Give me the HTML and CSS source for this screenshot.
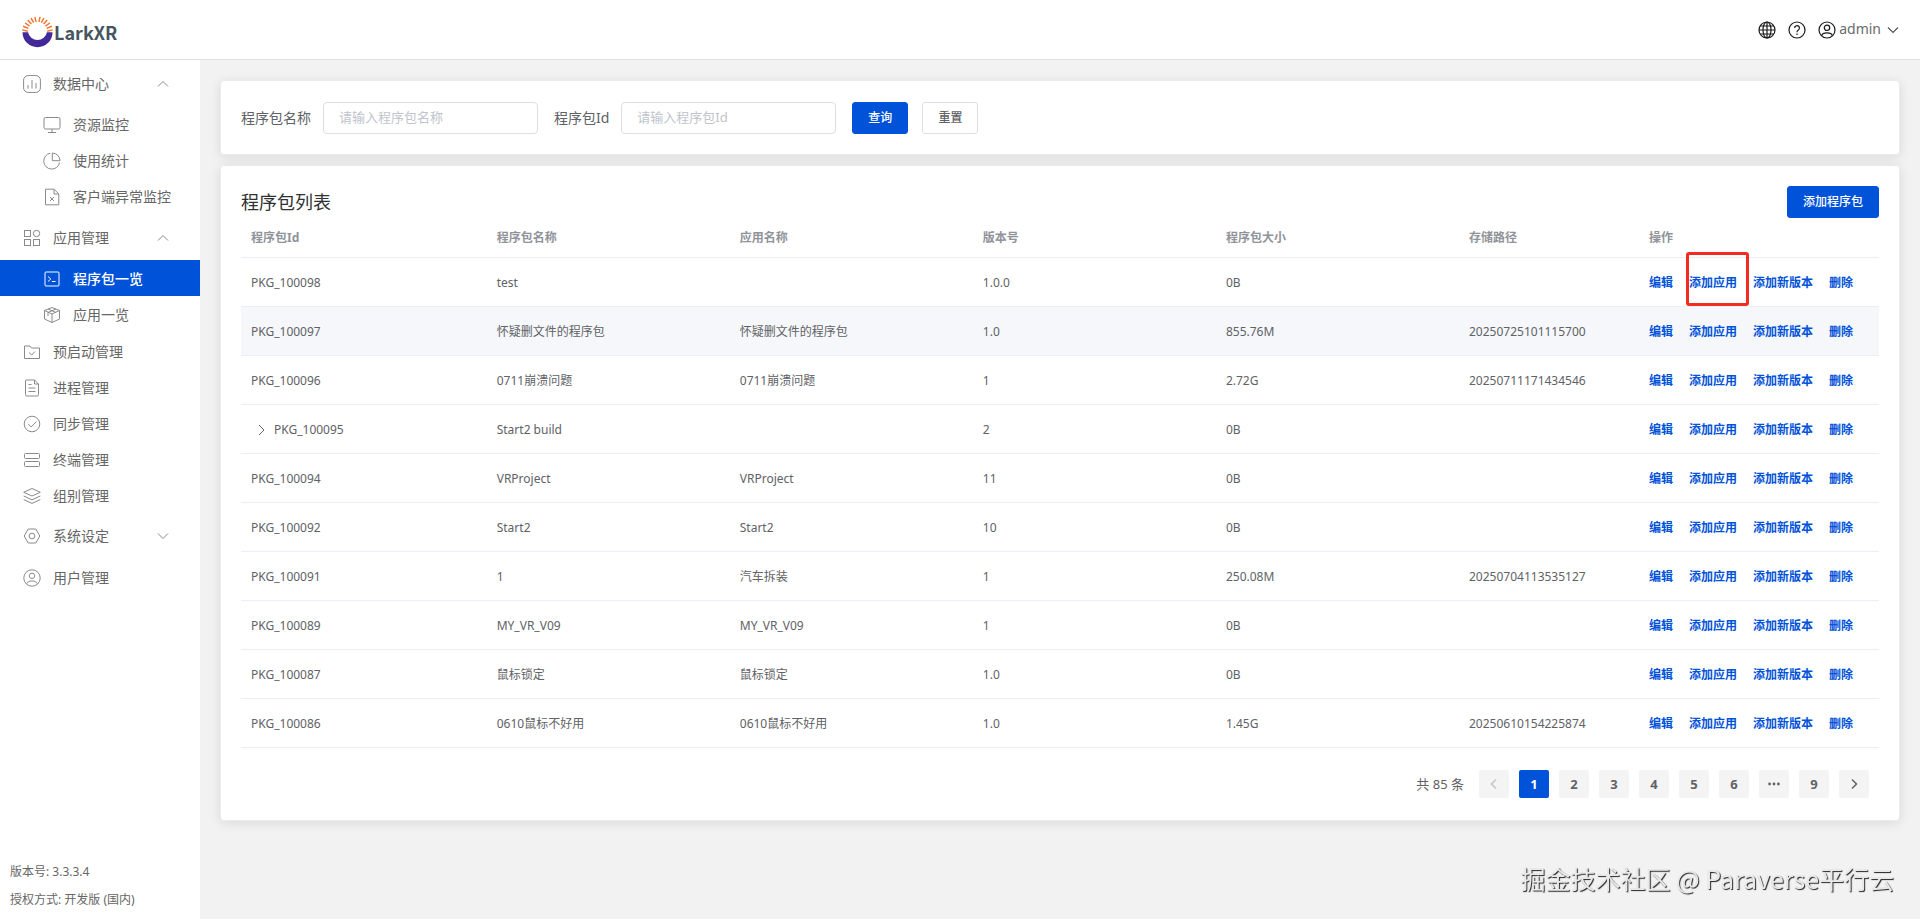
FILE: index.html
```html
<!DOCTYPE html>
<html lang="zh-CN">
<head>
<meta charset="utf-8">
<title>LarkXR</title>
<link rel="stylesheet" href="styles.css">
</head>
<body>
<header class="topbar">
  <a class="brand" href="#">
    <svg class="brand-mark" viewBox="0 0 32 32" aria-hidden="true">
      <path fill="none" stroke="#f0742c" stroke-width="1.5" d="M6 15.300L0.300 13.800M6.500 12.300L1.200 10.100M7.800 9.900L3.200 6.700M9.700 7.800L6 3.700M12 6.300L9.400 1.600M14.600 5.500L13.300 .4M17.400 5.500L18.700 .4M20 6.300L22.600 1.600M22.300 7.800L26 3.700M24.200 9.900L28.800 6.700M25.500 12.300L30.800 10.100M26 15.300L31.700 13.800"/>
      <path fill="#43289a" d="M.5 16.200H6.300A9.800 9.300 0 0 0 25.700 16.200H31.500A15.500 15.500 0 0 1 .5 16.200Z"/>
    </svg>
    <span class="brand-name">LarkXR</span>
  </a>
  <div class="tools">
    <button class="tool" aria-label="语言">
      <svg viewBox="0 0 18 18"><circle cx="9" cy="9" r="8"/><ellipse cx="9" cy="9" rx="4" ry="8"/><path d="M9 1V17M1 9H17M2.200 5H15.800M2.200 13H15.800"/></svg>
    </button>
    <button class="tool" aria-label="帮助">
      <svg viewBox="0 0 18 18"><circle cx="9" cy="9" r="8"/><path d="M6.600 7A2.400 2.400 0 1 1 10.300 9C9.400 9.600 9 10 9 11.200M9 12.600V14"/></svg>
    </button>
    <button class="tool user">
      <svg viewBox="0 0 18 18"><circle cx="9" cy="9" r="8"/><circle cx="9" cy="6.800" r="2.700"/><path d="M3.600 14.800C4.600 11 13.400 11 14.400 14.800"/></svg>
      <span>admin</span>
      <svg class="chev" viewBox="0 0 12 12"><path d="M1 3.500L6 8.500L11 3.500"/></svg>
    </button>
  </div>
</header>
<div class="body">
  <aside class="sidebar">
    <nav class="menu">
      <section class="group">
        <button class="item head"><svg viewBox="0 0 18 18"><rect x=".6" y=".6" width="16.800" height="16.800" rx="4.500"/><path d="M5 10V13.500M9 5V13.500M13 8V13.500"/></svg>数据中心<svg class="chev" viewBox="0 0 12 12"><path d="M1 8.500L6 3.500L11 8.500"/></svg></button>
        <a class="item sub" href="#"><svg viewBox="0 0 18 18"><rect x="1" y="1.500" width="16" height="11.500" rx="1.500"/><path d="M9 13V16.500M5 16.500H13"/></svg>资源监控</a>
        <a class="item sub" href="#"><svg viewBox="0 0 18 18"><path d="M7.300 1.200A8 8 0 1 0 16.600 10.500M9.300 1V8.700H17A7.800 7.800 0 0 0 9.300 1Z"/></svg>使用统计</a>
        <a class="item sub" href="#"><svg viewBox="0 0 18 18"><path d="M2.500 1.200H11L15.800 6V16.800H2.500ZM11 1.200V6H15.800M7 9L11 13M11 9L7 13"/></svg>客户端异常监控</a>
      </section>
      <section class="group">
        <button class="item head"><svg viewBox="0 0 18 18"><rect x="1.500" y="1.500" width="6" height="6"/><circle cx="13.500" cy="4.500" r="3.200"/><rect x="1.500" y="10.500" width="6" height="6"/><rect x="10.500" y="10.500" width="6" height="6"/></svg>应用管理<svg class="chev" viewBox="0 0 12 12"><path d="M1 8.500L6 3.500L11 8.500"/></svg></button>
        <a class="item sub active" href="#" aria-current="page"><svg viewBox="0 0 18 18"><rect x="2" y="2" width="14" height="14" rx="1"/><path d="M5 6.500L7.800 9L5 11.500M8.800 11.500H12.500"/></svg>程序包一览</a>
        <a class="item sub" href="#"><svg viewBox="0 0 18 18"><path d="M9 1.500L16.500 4.500V13L9 16.500L1.500 13V4.500ZM1.500 4.500L9 8L16.500 4.500M9 8V16.500M5 3L13 6.500M13 3L5 6.500M5 6.500V10"/></svg>应用一览</a>
      </section>
      <section class="group">
        <a class="item" href="#"><svg viewBox="0 0 18 18"><path d="M1.500 3H7L8.500 5H16.500V15.500H1.500ZM6 9.500L8.700 12L12 8.500"/></svg>预启动管理</a>
        <a class="item" href="#"><svg viewBox="0 0 18 18"><path d="M3.500 1H11.500L15.500 5V15.500A1.500 1.500 0 0 1 14 17H4A1.500 1.500 0 0 1 2.500 15.500V2A1 1 0 0 1 3.500 1ZM11.500 1V5H15.500M5.500 5.500H8.500M5.500 9H12.500M5.500 12.500H12.500"/></svg>进程管理</a>
        <a class="item" href="#"><svg viewBox="0 0 18 18"><circle cx="9" cy="9" r="7.800"/><path d="M5 8.800L8.200 12L13.500 6.500"/></svg>同步管理</a>
        <a class="item" href="#"><svg viewBox="0 0 18 18"><rect x="1.500" y="2.500" width="15" height="5" rx="1"/><rect x="1.500" y="10.500" width="15" height="5" rx="1"/></svg>终端管理</a>
        <a class="item" href="#"><svg viewBox="0 0 18 18"><path d="M9 1.500L17.300 5.300L9 9L.7 5.300ZM.7 9L9 12.800L17.300 9M.7 12.600L9 16.400L17.300 12.600"/></svg>组别管理</a>
        <button class="item head"><svg viewBox="0 0 18 18"><path d="M5.200 2H12.800L16.800 9L12.800 16H5.200L1.200 9Z"/><circle cx="9" cy="9" r="2.800"/></svg>系统设定<svg class="chev" viewBox="0 0 12 12"><path d="M1 3.500L6 8.500L11 3.500"/></svg></button>
      </section>
      <section class="group">
        <a class="item" href="#"><svg viewBox="0 0 18 18"><circle cx="9" cy="9" r="8.200"/><circle cx="9" cy="6.800" r="2.700"/><path d="M3.600 14.800C4.600 11 13.400 11 14.400 14.800"/></svg>用户管理</a>
      </section>
    </nav>
    <footer class="about">
      <p>版本号: 3.3.3.4</p>
      <p>授权方式: 开发版 (国内)</p>
    </footer>
  </aside>
  <main class="main">
    <form class="card filters">
      <label class="field">程序包名称<input class="input" type="text" placeholder="请输入程序包名称"></label>
      <label class="field">程序包Id<input class="input" type="text" placeholder="请输入程序包Id"></label>
      <div class="filter-actions">
        <button class="btn primary" type="button">查询</button>
        <button class="btn" type="button">重置</button>
      </div>
    </form>
    <section class="card list">
      <div class="list-head">
        <h1 class="title">程序包列表</h1>
        <button class="btn primary">添加程序包</button>
      </div>
      <table class="table">
        <colgroup><col class="col-id"><col><col><col><col><col class="col-path"><col class="col-ops"></colgroup>
        <thead><tr><th>程序包Id</th><th>程序包名称</th><th>应用名称</th><th>版本号</th><th>程序包大小</th><th>存储路径</th><th>操作</th></tr></thead>
        <tbody>
          <tr><td>PKG_100098</td><td>test</td><td></td><td>1.0.0</td><td>0B</td><td></td><td><div class="ops"><a href="#">编辑</a><a class="marked" href="#">添加应用</a><a href="#">添加新版本</a><a href="#">删除</a></div></td></tr>
          <tr class="hover"><td>PKG_100097</td><td>怀疑删文件的程序包</td><td>怀疑删文件的程序包</td><td>1.0</td><td>855.76M</td><td>20250725101115700</td><td><div class="ops"><a href="#">编辑</a><a href="#">添加应用</a><a href="#">添加新版本</a><a href="#">删除</a></div></td></tr>
          <tr><td>PKG_100096</td><td>0711崩溃问题</td><td>0711崩溃问题</td><td>1</td><td>2.72G</td><td>20250711171434546</td><td><div class="ops"><a href="#">编辑</a><a href="#">添加应用</a><a href="#">添加新版本</a><a href="#">删除</a></div></td></tr>
          <tr><td><div class="tree"><button class="expand" aria-label="展开"><svg viewBox="0 0 12 12"><path d="M4 1L9 6L4 11"/></svg></button>PKG_100095</div></td><td>Start2 build</td><td></td><td>2</td><td>0B</td><td></td><td><div class="ops"><a href="#">编辑</a><a href="#">添加应用</a><a href="#">添加新版本</a><a href="#">删除</a></div></td></tr>
          <tr><td>PKG_100094</td><td>VRProject</td><td>VRProject</td><td>11</td><td>0B</td><td></td><td><div class="ops"><a href="#">编辑</a><a href="#">添加应用</a><a href="#">添加新版本</a><a href="#">删除</a></div></td></tr>
          <tr><td>PKG_100092</td><td>Start2</td><td>Start2</td><td>10</td><td>0B</td><td></td><td><div class="ops"><a href="#">编辑</a><a href="#">添加应用</a><a href="#">添加新版本</a><a href="#">删除</a></div></td></tr>
          <tr><td>PKG_100091</td><td>1</td><td>汽车拆装</td><td>1</td><td>250.08M</td><td>20250704113535127</td><td><div class="ops"><a href="#">编辑</a><a href="#">添加应用</a><a href="#">添加新版本</a><a href="#">删除</a></div></td></tr>
          <tr><td>PKG_100089</td><td>MY_VR_V09</td><td>MY_VR_V09</td><td>1</td><td>0B</td><td></td><td><div class="ops"><a href="#">编辑</a><a href="#">添加应用</a><a href="#">添加新版本</a><a href="#">删除</a></div></td></tr>
          <tr><td>PKG_100087</td><td>鼠标锁定</td><td>鼠标锁定</td><td>1.0</td><td>0B</td><td></td><td><div class="ops"><a href="#">编辑</a><a href="#">添加应用</a><a href="#">添加新版本</a><a href="#">删除</a></div></td></tr>
          <tr><td>PKG_100086</td><td>0610鼠标不好用</td><td>0610鼠标不好用</td><td>1.0</td><td>1.45G</td><td>20250610154225874</td><td><div class="ops"><a href="#">编辑</a><a href="#">添加应用</a><a href="#">添加新版本</a><a href="#">删除</a></div></td></tr>
        </tbody>
      </table>
      <nav class="pager" aria-label="分页">
        <span class="total">共 85 条</span>
        <button class="page" disabled aria-label="上一页"><svg viewBox="0 0 12 12"><path d="M8 1.500L3.500 6L8 10.500"/></svg></button>
        <button class="page current">1</button>
        <button class="page">2</button>
        <button class="page">3</button>
        <button class="page">4</button>
        <button class="page">5</button>
        <button class="page">6</button>
        <button class="page" aria-label="更多"><svg class="dots" viewBox="0 0 12 12"><circle cx="1.600" cy="6" r="1.400"/><circle cx="6" cy="6" r="1.400"/><circle cx="10.400" cy="6" r="1.400"/></svg></button>
        <button class="page">9</button>
        <button class="page" aria-label="下一页"><svg viewBox="0 0 12 12"><path d="M4 1.500L8.500 6L4 10.500"/></svg></button>
      </nav>
    </section>
  </main>
</div>
<div class="watermark">掘金技术社区 @ Paraverse平行云</div>
</body>
</html>
```
FILE: styles.css
```css
* { box-sizing: border-box; }

body {
  margin: 0;
  min-height: 100vh;
  display: flex;
  flex-direction: column;
  background: #f2f2f2;
  color: #606266;
  font: 14px/20px "Noto Sans", "Noto Sans CJK SC", sans-serif;
}

button, input { font: inherit; color: inherit; }
button { cursor: pointer; }
a { color: inherit; text-decoration: none; }
svg { flex: none; fill: none; stroke: currentColor; }

.topbar {
  height: 60px;
  display: flex;
  align-items: center;
  justify-content: space-between;
  padding: 0 21px 0 22px;
  background: #fff;
  border-bottom: 1px solid #e0e0e0;
}
.brand { display: flex; align-items: center; gap: 1px; padding-top: 5px; }
.brand-mark { width: 31px; height: 32px; stroke: none; }
.brand-name { color: #45565f; font: bold 18px/24px "Noto Sans CJK SC", sans-serif; }
.tools { display: flex; gap: 12px; color: #1a1a1a; }
.tool {
  display: flex;
  align-items: center;
  padding: 0;
  border: 0;
  background: none;
}
.tool svg { width: 18px; height: 18px; stroke-width: 1.2; }
.user { gap: 3px; }
.user span { padding-bottom: 2px; color: #6b6b6b; }
.user .chev { width: 12px; height: 12px; margin-left: 3px; color: #555; }

.body { flex: 1; display: flex; }

.sidebar {
  width: 200px;
  flex: none;
  display: flex;
  flex-direction: column;
  justify-content: space-between;
  background: #fff;
  color: #666;
}
.menu { display: flex; flex-direction: column; gap: 1px; padding-top: 1px; }
.group { display: flex; flex-direction: column; }
.item {
  height: 36px;
  display: flex;
  align-items: center;
  gap: 12px;
  padding: 2px 23px 0;
  border: 0;
  background: none;
  white-space: nowrap;
}
.item svg { width: 18px; height: 18px; color: #8a8a8a; }
.item .chev { width: 12px; height: 12px; margin-left: auto; }
.item.head { height: 45px; padding: 0 31px 0 23px; }
.item.sub { padding-left: 43px; }
.item.active { background: #0052d9; color: #fff; font-weight: 500; }
.item.active svg { color: #fff; }
.about { padding: 0 10px 9px; font-size: 12px; }
.about p { margin: 8px 0 0; }

.main {
  flex: 1;
  min-width: 0;
  display: flex;
  flex-direction: column;
  gap: 10px;
  padding: 20px;
}
.card {
  background: #fff;
  border: 1px solid #ebebeb;
  border-radius: 4px;
  box-shadow: 0 2px 12px rgba(0, 0, 0, 0.1);
}
.filters { display: flex; align-items: center; gap: 16px; padding: 21px 20px 20px; }
.field { display: flex; align-items: center; gap: 12px; }
.input {
  width: 215px;
  height: 32px;
  padding: 0 15px 2px;
  border: 1px solid #dcdfe6;
  border-radius: 4px;
  background: #fff;
  font-size: 13px;
}
.input::placeholder { color: #c0c4cc; }
.filter-actions { display: flex; gap: 14px; }
.btn {
  height: 32px;
  padding: 0 15px;
  border: 1px solid #dcdfe6;
  border-radius: 3px;
  background: #fff;
  font-size: 12px;
  font-weight: 500;
}
.btn.primary { background: #0052d9; border-color: #0052d9; color: #fff; }

.list { padding: 20px 20px 22px; }
.list-head { display: flex; align-items: center; justify-content: space-between; }
.title { margin: 0; color: #303133; font-size: 18px; font-weight: 400; }

.table {
  width: 100%;
  table-layout: fixed;
  border-collapse: separate;
  border-spacing: 0;
  font-size: 12px;
}
.col-id { width: 15%; }
.col-path { width: 180px; }
.col-ops { width: 240px; }
.table th, .table td {
  height: 49px;
  padding: 2px 10px 0;
  border-bottom: 1px solid #ebeef5;
  text-align: left;
}
.table th { height: 40px; padding-top: 0; color: #909399; font-weight: 700; }
.hover td { background: #f5f7fa; }
.ops { display: flex; gap: 16px; color: #0052d9; font-weight: 700; }
.marked { position: relative; }
.marked::after {
  content: "";
  position: absolute;
  inset: -21px -12px -13px -3px;
  border: 3px solid #f22c20;
  border-radius: 3px;
}
.tree { display: flex; align-items: center; }
.expand {
  width: 23px;
  padding: 0 4px;
  border: 0;
  background: none;
}
.expand svg { display: block; width: 12px; height: 12px; }

.pager {
  display: flex;
  align-items: center;
  justify-content: flex-end;
  gap: 10px;
  padding: 22px 10px 0;
  font-size: 13px;
}
.total { margin-right: 5px; }
.page {
  width: 30px;
  height: 28px;
  display: flex;
  align-items: center;
  justify-content: center;
  padding: 0;
  border: 0;
  border-radius: 2px;
  background: #f4f4f5;
  font-weight: 700;
}
.page svg { width: 12px; height: 12px; stroke-width: 1.5; }
.page .dots { fill: currentColor; stroke: none; }
.page.current { background: #0052d9; color: #fff; }
.page:disabled { color: #c0c4cc; }

.watermark {
  position: fixed;
  right: 26px;
  bottom: 23px;
  color: #e8e8e8;
  font: 25px/36px "Noto Sans CJK SC", sans-serif;
  text-shadow: 1px 1px 1px #222;
}
```
